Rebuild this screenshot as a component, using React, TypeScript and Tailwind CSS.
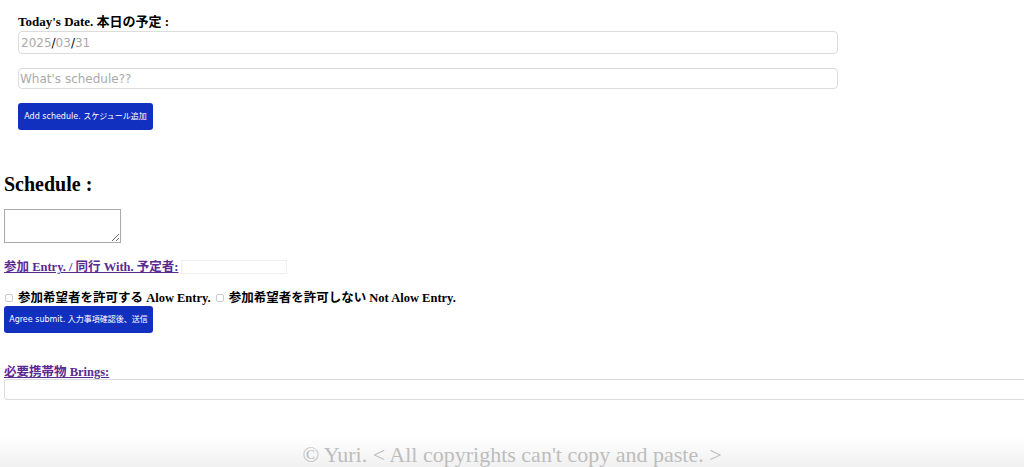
import React from 'react';

const serif = "font-['Liberation_Serif','Noto_Sans_CJK_JP',serif]";

export default function App() {
  return (
    <div className="relative h-[467px] w-[1024px] overflow-hidden bg-white">
      <section className="pl-[18px] pt-[14px]">
        <label className={`block text-[13px] font-bold leading-[16px] text-black ${serif}`}>
          Today's Date. 本日の予定 :
        </label>
        <div className="mt-[1px] flex h-[23px] w-[820px] items-center rounded-[4px] border border-[#dcdcdc] px-[2px] font-['DejaVu_Sans',sans-serif] text-[12px] text-[#aaa]">
          2025<span className="text-black">/</span>03<span className="text-black">/</span>31
        </div>
        <input
          className="mt-[14px] block h-[21px] w-[820px] rounded-[4px] border border-[#dcdcdc] px-[1px] font-['DejaVu_Sans',sans-serif] text-[12px] outline-none placeholder:text-[#aaa]"
          placeholder="What's schedule??"
        />
        <button className="mt-[14px] flex h-[27px] w-[135px] items-center justify-center rounded-[3px] bg-[#1130c0] font-['DejaVu_Sans','Noto_Sans_CJK_JP',sans-serif] text-[8px] text-white">
          Add schedule. スケジュール追加
        </button>
      </section>

      <h2 className={`ml-[4px] mt-[42px] text-[20px] font-bold leading-[24px] text-black ${serif}`}>
        Schedule :
      </h2>

      <textarea className="ml-[4px] mt-[13px] block h-[34px] w-[117px] resize border border-[#aaa] outline-none" />

      <div className="ml-[4px] mt-[17px] flex items-center">
        <a href="#" className={`text-[12.5px] font-bold leading-[14px] text-[#5b2a91] underline ${serif}`}>
          参加 Entry. / 同行 With. 予定者:
        </a>
        <input className="ml-[3px] h-[14px] w-[106px] border border-[#f0f0f0] outline-none" />
      </div>

      <div className={`ml-[5px] mt-[17px] flex items-center text-[12.5px] font-bold leading-[14px] text-black ${serif}`}>
        <span className="mr-[5px] inline-block h-[8px] w-[8px] rounded-[2px] border border-[#ccc]" />
        参加希望者を許可する Alow Entry.
        <span className="ml-[5px] mr-[5px] inline-block h-[8px] w-[8px] rounded-[2px] border border-[#ccc]" />
        参加希望者を許可しない Not Alow Entry.
      </div>

      <button className="ml-[4px] mt-[1px] flex h-[27px] w-[149px] items-center justify-center rounded-[3px] bg-[#1130c0] font-['DejaVu_Sans','Noto_Sans_CJK_JP',sans-serif] text-[8px] text-white">
        Agree submit. 入力事項確認後、送信
      </button>

      <a href="#" className={`ml-[4px] mt-[32px] block w-fit text-[12.5px] font-bold leading-[14px] text-[#5b2a91] underline ${serif}`}>
        必要携帯物 Brings:
      </a>
      <input className="ml-[4px] block h-[21px] w-[1030px] rounded-[3px] border border-[#dcdcdc] outline-none" />

      <footer className="mt-[36px] h-[41px] bg-gradient-to-b from-white to-[#ececec] pt-[6px] text-center font-['Liberation_Serif',serif] text-[22px] leading-[26px] text-[#bdbdbd]">
        © Yuri. &lt; All copyrights can't copy and paste. &gt;
      </footer>
    </div>
  );
}
